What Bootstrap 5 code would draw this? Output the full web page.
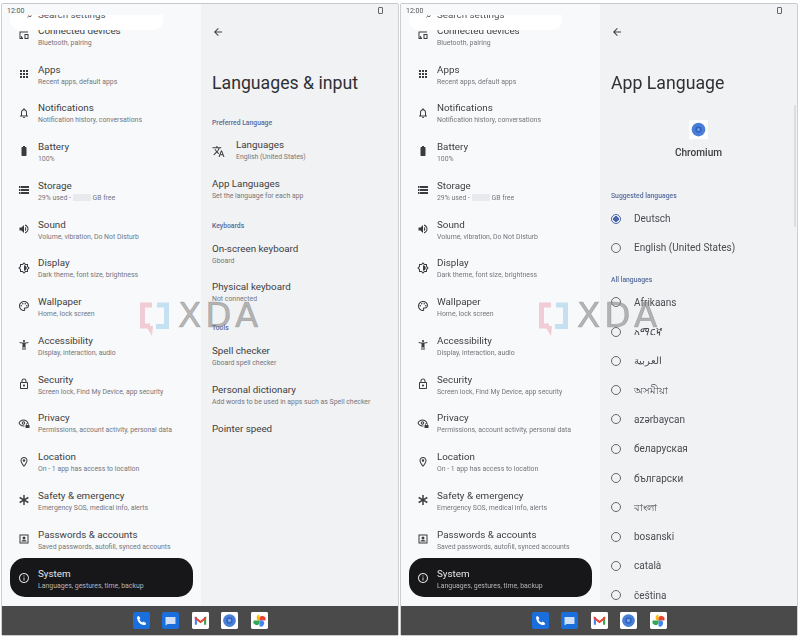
<!DOCTYPE html>
<html lang="en">
<head>
  <meta charset="UTF-8">
  <title>Settings</title>
  <link href="https://cdn.jsdelivr.net/npm/bootstrap@5.3.0/dist/css/bootstrap.min.css" rel="stylesheet">
  <style>
    html, body { height: 639px; overflow: hidden; background: #fff; }
    body { font-family: Roboto, "Noto Sans", "Noto Sans CJK SC", sans-serif; color: #3d3e41; }
    .shot { height: 639px; padding: 4px 2px 4px 2px; gap: 3px; filter: blur(.35px); opacity: .999; transform: translateZ(0); }
    .tablet { width: 396px; position: relative; box-shadow: 0 -1px 0 #c9c9c9, -1px 0 0 #cfcfcf, 1px 0 0 #cfcfcf, 0 1px 0 #c9c9c9; }
    .panes { height: 602px; }
    .sideBar { width: 199px; background: #f8f9fb; overflow: hidden; }
    .detail { width: 197px; background: #f1f2f4; position: relative; }
    .statusRow { height: 11px; font-size: 7px; line-height: 15px; padding-left: 5px; color: #55565a; }
    .searchPill { height: 14.5px; margin: 0 38px 0 8px; background: #fff; border-radius: 0 0 10px 10px; overflow: hidden; padding-left: 17px; gap: 5px; font-size: 9.8px; line-height: 10px; color: #55565a; }
    .searchPill span { margin-top: -5.5px; display: block; }
    .listClip { height: 576.5px; overflow: hidden; }
    .listInner { margin-top: -13.8px; }
    .setRow { height: 38.77px; margin: 0 8px; padding: 0 8px; gap: 8px; border-radius: 15px; }
    .setRow svg { width: 12px; height: 12px; fill: #3b3c3f; flex: none; }
    .setRow .txt { padding-top: 3.5px; }
    .setName { font-size: 9.8px; line-height: 12px; margin-bottom: 1px; color: #3d3e41; }
    .setSub { font-size: 6.9px; line-height: 11px; color: #76777b; white-space: nowrap; }
    .setRow.activeRow { background: #17171a; }
    .activeRow svg { fill: #d8d8d8; }
    .activeRow .setName { color: #e4e4e4; }
    .activeRow .setSub { color: #b5b5b5; }
    .blurred { display: inline-block; width: 18px; height: 7px; background: #e9eaee; vertical-align: -1px; }
    .backBtn { padding: 22px 0 0 11px; height: 38px; }
    .backBtn svg { width: 12px; height: 12px; fill: #3b3c3f; display: block; }
    .bigTitle { font-size: 17.7px; line-height: 24px; margin: 29px 0 0 11px; color: #2f3033; }
    .sectionName { font-size: 6.8px; line-height: 10px; color: #566a9a; padding-left: 11px; font-weight: 500; }
    .prefRow { height: 38.7px; padding-left: 11px; gap: 11px; }
    .prefRow svg { width: 13px; height: 13px; fill: #3b3c3f; flex: none; }
    .onlyName { padding-bottom: 9px; }
    .appIcon { width: 19px; height: 19px; background: #fff; margin: 0 auto; }
    .appName { font-size: 10.1px; font-weight: 500; line-height: 12px; text-align: center; margin-top: 8px; color: #3d3e41; }
    .radioRow { height: 29.3px; padding-left: 11px; gap: 13px; font-size: 10px; color: #4b4c50; white-space: nowrap; }
    .radioDot { width: 10px; height: 10px; border: 1.2px solid #66676b; border-radius: 50%; flex: none; }
    .radioDot.onDot { border-color: #4a66ad; background: radial-gradient(circle, #4a66ad 0 2.6px, transparent 3px); }
    .scrollThumb { position: absolute; right: 1px; top: 101px; width: 2px; height: 122px; background: #dcdde0; border-radius: 2px; }
    .batteryMini { position: absolute; right: 15px; top: 3px; width: 5px; height: 7px; border: 1px solid #66676b; border-radius: 1px; }
    .dockBar { height: 29px; background: #4a4a4b; gap: 12.5px; }
    .dockBtn { width: 17px; height: 17px; display: block; }
    .xdaMark { position: absolute; left: 138px; top: 298px; gap: 6px; pointer-events: none; }
    .xdaMark svg { width: 32px; height: 34px; display: block; }
    .xdaText { font-family: "DejaVu Sans", sans-serif; font-size: 34px; line-height: 26px; letter-spacing: 4px; color: rgba(125,125,125,.55); -webkit-text-stroke: .6px rgba(125,125,125,.55); }
    .prefGap { margin-top: 23px; }
    .firstPref { margin-top: 4px; }
    .keysGap { margin-top: 12px; height: 10px; margin-bottom: 4px; }
    .toolsGap { margin-top: 10px; height: 10px; margin-bottom: 5px; }
    .iconGap { margin-top: 25px; }
    .sugGap { margin-top: 32px; margin-bottom: 3px; }
    .allGap { margin-top: 12px; margin-bottom: 3px; }
  </style>
</head>
<body>
  <div class="shot d-flex">
    <div class="tablet d-flex flex-column">
      <div class="panes d-flex">
        <div class="sideBar slotSide"></div>
        <div class="detail">
          <div class="batteryMini"></div>
          <div class="backBtn"><svg viewBox="0 0 24 24"><path d="M20 11H7.830l5.590-5.590L12 4l-8 8 8 8 1.410-1.410L7.830 13H20v-2z"/></svg></div>
          <div class="bigTitle">Languages &amp; input</div>
          <div class="sectionName prefGap">Preferred Language</div>
          <div class="prefRow d-flex align-items-center firstPref">
            <svg viewBox="0 0 24 24"><path d="M12.870 15.070l-2.540-2.510.03-.03c1.740-1.940 2.980-4.170 3.710-6.530H17V4h-7V2H8v2H1v1.990h11.170C11.500 7.920 10.440 9.750 9 11.350 8.070 10.320 7.300 9.190 6.690 8h-2c.73 1.630 1.730 3.170 2.980 4.560l-5.090 5.020L4 19l5-5 3.110 3.110.76-2.040zM18.500 10h-2L12 22h2l1.120-3h4.750L21 22h2l-4.500-12zm-2.620 7l1.620-4.330L19.120 17h-3.240z"/></svg>
            <div><div class="setName">Languages</div><div class="setSub">English (United States)</div></div>
          </div>
          <div class="prefRow d-flex align-items-center"><div><div class="setName">App Languages</div><div class="setSub">Set the language for each app</div></div></div>
          <div class="sectionName keysGap">Keyboards</div>
          <div class="prefRow d-flex align-items-center"><div><div class="setName">On-screen keyboard</div><div class="setSub">Gboard</div></div></div>
          <div class="prefRow d-flex align-items-center"><div><div class="setName">Physical keyboard</div><div class="setSub">Not connected</div></div></div>
          <div class="sectionName toolsGap">Tools</div>
          <div class="prefRow d-flex align-items-center"><div><div class="setName">Spell checker</div><div class="setSub">Gboard spell checker</div></div></div>
          <div class="prefRow d-flex align-items-center"><div><div class="setName">Personal dictionary</div><div class="setSub">Add words to be used in apps such as Spell checker</div></div></div>
          <div class="prefRow d-flex align-items-center onlyName"><div class="setName">Pointer speed</div></div>
        </div>
      </div>
      <div class="dockBar d-flex justify-content-center align-items-center slotDock"></div>
      <div class="xdaMark d-flex align-items-start slotMark"></div>
    </div>

    <div class="tablet d-flex flex-column">
      <div class="panes d-flex">
        <div class="sideBar slotSide"></div>
        <div class="detail">
          <div class="batteryMini"></div>
          <div class="scrollThumb"></div>
          <div class="backBtn"><svg viewBox="0 0 24 24"><path d="M20 11H7.830l5.590-5.590L12 4l-8 8 8 8 1.410-1.410L7.830 13H20v-2z"/></svg></div>
          <div class="bigTitle">App Language</div>
          <div class="appIcon d-flex align-items-center justify-content-center iconGap">
            <svg width="15" height="15" viewBox="0 0 24 24"><circle cx="12" cy="12" r="11" fill="#4a7fd6"/><circle cx="12" cy="12" r="5" fill="#2f62bf"/><circle cx="12" cy="12" r="2.500" fill="#6f9fe6"/></svg>
          </div>
          <div class="appName">Chromium</div>
          <div class="sectionName sugGap">Suggested languages</div>
          <div id="radioList"></div>
        </div>
      </div>
      <div class="dockBar d-flex justify-content-center align-items-center slotDock"></div>
      <div class="xdaMark d-flex align-items-start slotMark"></div>
    </div>
  </div>

  <script>
    const icons = {
      connected: '<path fill-rule="evenodd" d="M3 5h17v2H5v11h5v2H3V5zm10 5h8v10h-8V10zm2 2v6h4v-6h-4zM6 14a3 3 0 0 1 3 3v1H6v-4z"/>',
      apps: '<path d="M4 8h4V4H4v4zm6 12h4v-4h-4v4zm-6 0h4v-4H4v4zm0-6h4v-4H4v4zm6 0h4v-4h-4v4zm6-10v4h4V4h-4zm-6 4h4V4h-4v4zm6 6h4v-4h-4v4zm0 6h4v-4h-4v4z"/>',
      bell: '<path d="M12 22c1.100 0 2-.9 2-2h-4c0 1.100.9 2 2 2zm6-6v-5c0-3.070-1.630-5.640-4.500-6.320V4c0-.83-.67-1.500-1.500-1.500s-1.500.67-1.500 1.500v.68C7.640 5.360 6 7.920 6 11v5l-2 2v1h16v-1l-2-2zm-2 1H8v-6c0-2.480 1.510-4.500 4-4.500s4 2.020 4 4.500v6z"/>',
      battery: '<path d="M15.670 4H14V2h-4v2H8.330C7.600 4 7 4.600 7 5.330v15.330C7 21.400 7.600 22 8.330 22h7.330c.74 0 1.340-.6 1.340-1.330V5.330C17 4.600 16.400 4 15.670 4z"/>',
      storage: '<path d="M2 20h20v-4H2v4zm2-3h2v2H4v-2zM2 4v4h20V4H2zm4 3H4V5h2v2zm-4 7h20v-4H2v4zm2-3h2v2H4v-2z"/>',
      sound: '<path d="M3 9v6h4l5 5V4L7 9H3zm13.500 3c0-1.770-1.020-3.290-2.500-4.030v8.050c1.480-.73 2.500-2.250 2.500-4.020zM14 3.230v2.060c2.890.86 5 3.540 5 6.710s-2.110 5.850-5 6.710v2.060c4.010-.91 7-4.490 7-8.770s-2.990-7.860-7-8.770z"/>',
      display: '<path d="M20 8.690V4h-4.690L12 .69 8.690 4H4v4.690L.69 12 4 15.310V20h4.690L12 23.310 15.310 20H20v-4.690L23.310 12 20 8.690zm-2 5.790V18h-3.520L12 20.480 9.520 18H6v-3.520L3.520 12 6 9.520V6h3.520L12 3.520 14.480 6H18v3.520L20.480 12 18 14.480zM12 6.500v11c3.030 0 5.500-2.470 5.500-5.500S15.030 6.500 12 6.500z"/>',
      palette: '<path fill-rule="evenodd" d="M12 2C6.490 2 2 6.490 2 12s4.490 10 10 10c1.380 0 2.500-1.120 2.500-2.500 0-.61-.23-1.200-.64-1.670-.08-.1-.13-.21-.13-.33 0-.28.22-.5.5-.5H16c3.310 0 6-2.690 6-6 0-4.960-4.490-9-10-9zm0 2c4.410 0 8 3.140 8 7 0 2.210-1.790 4-4 4h-1.770c-1.380 0-2.500 1.120-2.500 2.500 0 .6.22 1.180.63 1.650.08.1.14.21.14.35 0 .28-.22.5-.5.5-4.410 0-8-3.590-8-8s3.590-8 8-8z"/><circle cx="6.500" cy="11.500" r="1.500"/><circle cx="9.500" cy="7.500" r="1.500"/><circle cx="14.500" cy="7.500" r="1.500"/><circle cx="17.500" cy="11.500" r="1.500"/>',
      access: '<path d="M20.500 6c-2.610.7-5.670 1-8.500 1s-5.890-.3-8.500-1L3 8c1.860.5 4 .83 6 1v13h2v-6h2v6h2V9c2-.17 4.140-.5 6-1l-.5-2zM12 6c1.100 0 2-.9 2-2s-.9-2-2-2-2 .9-2 2 .9 2 2 2z"/>',
      lock: '<path d="M18 8h-1V6c0-2.760-2.240-5-5-5S7 3.240 7 6v2H6c-1.100 0-2 .9-2 2v10c0 1.100.9 2 2 2h12c1.100 0 2-.9 2-2V10c0-1.100-.9-2-2-2zM9 6c0-1.660 1.340-3 3-3s3 1.340 3 3v2H9V6zm9 14H6V10h12v10zm-6-3c1.100 0 2-.9 2-2s-.9-2-2-2-2 .9-2 2 .9 2 2 2z"/>',
      privacy: '<path fill-rule="evenodd" d="M11 5C6.500 5 2.700 7.900 1 12c1.700 4.100 5.500 7 10 7 .7 0 1.400-.1 2-.2v-2c-.6.1-1.300.2-2 .2-3.400 0-6.400-2-7.900-5C4.600 9 7.600 7 11 7s6.400 2 7.900 5H21C19.300 7.900 15.500 5 11 5zm0 3.500a3.500 3.500 0 1 0 0 7 3.500 3.500 0 0 0 0-7zm0 2a1.500 1.500 0 1 1 0 3 1.500 1.500 0 0 1 0-3z"/><rect x="15" y="16" width="8" height="6" rx="1"/><path d="M16.500 16v-1.500a2.500 2.500 0 0 1 5 0V16h-1.300v-1.500a1.200 1.200 0 0 0-2.400 0V16z"/>',
      pin: '<path fill-rule="evenodd" d="M12 2C8.130 2 5 5.130 5 9c0 5.250 7 13 7 13s7-7.750 7-13c0-3.870-3.130-7-7-7zm0 2c2.760 0 5 2.240 5 5 0 2.880-2.880 7.190-5 9.880C9.920 16.210 7 11.850 7 9c0-2.760 2.240-5 5-5zm0 2.500a2.500 2.500 0 1 0 0 5 2.500 2.500 0 0 0 0-5z"/>',
      star: '<path d="M10.500 2h3v7.400l6.400-3.700 1.500 2.600L15 12l6.400 3.700-1.500 2.600-6.400-3.700V22h-3v-7.400l-6.400 3.700-1.500-2.600L9 12 2.600 8.300l1.500-2.600 6.400 3.700z"/>',
      account: '<path fill-rule="evenodd" d="M3 3h18v18H3V3zm2 2v14h14V5H5zm7 2a3 3 0 1 1 0 6 3 3 0 0 1 0-6zm-5 8.500c1.500-1 3.200-1.500 5-1.500s3.500.5 5 1.500V17H7v-1.500z"/>',
      info: '<path d="M11 7h2v2h-2zm0 4h2v6h-2zm1-9C6.480 2 2 6.480 2 12s4.480 10 10 10 10-4.480 10-10S17.520 2 12 2zm0 18c-4.410 0-8-3.590-8-8s3.590-8 8-8 8 3.590 8 8-3.590 8-8 8z"/>'
    };

    const ajustes = [
      ['connected', 'Connected devices', 'Bluetooth, pairing'],
      ['apps', 'Apps', 'Recent apps, default apps'],
      ['bell', 'Notifications', 'Notification history, conversations'],
      ['battery', 'Battery', '100%'],
      ['storage', 'Storage', '29% used - <span class="blurred"></span> GB free'],
      ['sound', 'Sound', 'Volume, vibration, Do Not Disturb'],
      ['display', 'Display', 'Dark theme, font size, brightness'],
      ['palette', 'Wallpaper', 'Home, lock screen'],
      ['access', 'Accessibility', 'Display, interaction, audio'],
      ['lock', 'Security', 'Screen lock, Find My Device, app security'],
      ['privacy', 'Privacy', 'Permissions, account activity, personal data'],
      ['pin', 'Location', 'On - 1 app has access to location'],
      ['star', 'Safety &amp; emergency', 'Emergency SOS, medical info, alerts'],
      ['account', 'Passwords &amp; accounts', 'Saved passwords, autofill, synced accounts'],
      ['info', 'System', 'Languages, gestures, time, backup']
    ];

    const sideHtml = `
      <div class="statusRow">12:00</div>
      <div class="searchPill d-flex"><span>&#8981;</span><span>Search settings</span></div>
      <div class="listClip"><div class="listInner">` +
      ajustes.map(a => `
        <div class="setRow d-flex align-items-center${a[1] === 'System' ? ' activeRow' : ''}">
          <svg viewBox="0 0 24 24">${icons[a[0]]}</svg>
          <div class="txt"><div class="setName">${a[1]}</div><div class="setSub">${a[2]}</div></div>
        </div>`).join('') + `</div></div>`;
    document.querySelectorAll('.slotSide').forEach(el => el.innerHTML = sideHtml);

    const dockHtml = `
      <svg class="dockBtn" viewBox="0 0 24 24"><rect width="24" height="24" rx="3" fill="#1a6fdc"/><path fill="#fff" d="M8.200 5.500l2.300 3.400-1.400 1.700c.8 1.900 2.300 3.400 4.300 4.300l1.700-1.400 3.400 2.300-.9 2.600c-6.800.4-12.200-5-11.800-11.800z"/></svg>
      <svg class="dockBtn" viewBox="0 0 24 24"><rect width="24" height="24" rx="3" fill="#1a6fdc"/><path fill="#cfe0f6" d="M5 7h14v10H8l-3 2z"/></svg>
      <svg class="dockBtn" viewBox="0 0 24 24"><rect width="24" height="24" rx="2" fill="#fff"/><path fill="#4285f4" d="M4 7h3v11H4z"/><path fill="#34a853" d="M17 7h3v11h-3z"/><path fill="#ea4335" d="M4 6l8 6.500L20 6v4l-8 6-8-6z"/></svg>
      <svg class="dockBtn" viewBox="0 0 24 24"><rect width="24" height="24" rx="2" fill="#fff"/><circle cx="12" cy="12" r="9" fill="#4a7fd6"/><circle cx="12" cy="12" r="4.500" fill="#2f62bf"/><circle cx="12" cy="12" r="2.300" fill="#7aa5e8"/></svg>
      <svg class="dockBtn" viewBox="0 0 24 24"><rect width="24" height="24" rx="2" fill="#fff"/><path fill="#fbbc04" d="M12 12V4a4 4 0 0 0-4 4 4 4 0 0 0 4 4z"/><path fill="#ea4335" d="M12 12h8a4 4 0 0 0-8-4z"/><path fill="#4285f4" d="M12 12v8a4 4 0 0 0 4-8z"/><path fill="#34a853" d="M12 12H4a4 4 0 0 0 8 4z"/></svg>`;
    document.querySelectorAll('.slotDock').forEach(el => el.innerHTML = dockHtml);

    const markHtml = `
      <svg viewBox="0 0 32 34"><path fill="none" stroke="#f1ccd6" stroke-width="5" d="M12 3H2.500v21H10"/><path fill="#f1ccd6" d="M6 24h7l-1 10z"/><path fill="none" stroke="#c5e0f0" stroke-width="5" d="M17 3h9.500v21.500H16"/></svg>
      <div class="xdaText">XDA</div>`;
    document.querySelectorAll('.slotMark').forEach(el => el.innerHTML = markHtml);

    const idiomas = ['Afrikaans', 'አማርኛ', 'العربية', 'অসমীয়া', 'azərbaycan', 'беларуская', 'български', 'বাংলা', 'bosanski', 'català', 'čeština'];
    const fila = (t, on) => `<div class="radioRow d-flex align-items-center"><span class="radioDot${on ? ' onDot' : ''}"></span><span>${t}</span></div>`;
    document.getElementById('radioList').innerHTML =
      fila('Deutsch', true) + fila('English (United States)', false) +
      '<div class="sectionName allGap">All languages</div>' +
      idiomas.map(t => fila(t, false)).join('');
  </script>
  <script src="https://cdn.jsdelivr.net/npm/bootstrap@5.3.0/dist/js/bootstrap.bundle.min.js"></script>
</body>
</html>
